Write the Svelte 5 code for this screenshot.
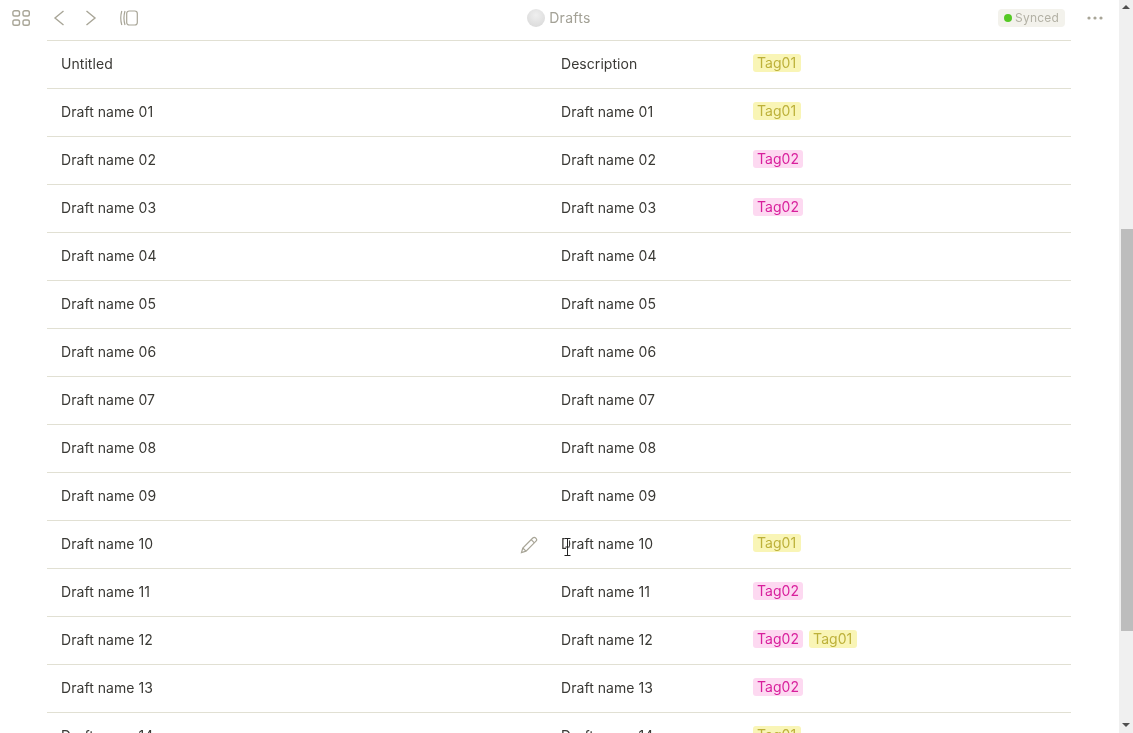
<script>
	const yellow = 'Tag01';
	const pink = 'Tag02';

	const rows = [
		{ name: 'Untitled', description: 'Description', tags: [yellow] },
		{ name: 'Draft name 01', tags: [yellow] },
		{ name: 'Draft name 02', tags: [pink] },
		{ name: 'Draft name 03', tags: [pink] },
		{ name: 'Draft name 04', tags: [] },
		{ name: 'Draft name 05', tags: [] },
		{ name: 'Draft name 06', tags: [] },
		{ name: 'Draft name 07', tags: [] },
		{ name: 'Draft name 08', tags: [] },
		{ name: 'Draft name 09', tags: [] },
		{ name: 'Draft name 10', tags: [yellow], hover: true },
		{ name: 'Draft name 11', tags: [pink] },
		{ name: 'Draft name 12', tags: [pink, yellow] },
		{ name: 'Draft name 13', tags: [pink] },
		{ name: 'Draft name 14', tags: [yellow] }
	];
</script>

<div class="app">
	<div class="main">
		<header class="toolbar">
			<div class="tools">
				<svg class="grid-icon" width="20" height="16" viewBox="0 0 20 16">
					<rect x="1.9" y="0.7" width="6.6" height="5.3" rx="1.8" />
					<rect x="12" y="0.7" width="6.3" height="5.3" rx="1.8" />
					<rect x="1.9" y="10" width="6.6" height="5.3" rx="1.8" />
					<rect x="12" y="10" width="6.3" height="5.3" rx="1.8" />
				</svg>
				<svg class="nav-icon" width="12" height="16" viewBox="0 0 12 16">
					<path d="M10.5 1 L2 8 L10.5 15" />
				</svg>
				<svg class="nav-icon next" width="12" height="16" viewBox="0 0 12 16">
					<path d="M1.5 1 L10 8 L1.5 15" />
				</svg>
				<svg class="panel-icon" width="18" height="16" viewBox="0 0 18 16">
					<path d="M1.8 1 C0.6 5 0.6 11 1.8 15" />
					<path d="M5 1 C3.8 5 3.8 11 5 15" />
					<rect x="6.7" y="1" width="10.6" height="14" rx="2.5" />
				</svg>
			</div>
			<div class="title">
				<span class="avatar"></span>
				<span>Drafts</span>
			</div>
			<div class="status">
				<span class="synced"><i class="dot"></i>Synced</span>
				<svg class="more" width="16" height="4" viewBox="0 0 16 4">
					<circle cx="2" cy="2" r="1.6" />
					<circle cx="8" cy="2" r="1.6" />
					<circle cx="14" cy="2" r="1.6" />
				</svg>
			</div>
		</header>

		<div class="list">
			{#each rows as row}
				<div class="row">
					<div class="name">
						<span>{row.name}</span>
						{#if row.hover}
							<svg class="edit" width="18" height="18" viewBox="0 0 18 18">
								<path d="M1.5 16.5 L2.8 12 L12.8 2 C13.6 1.2 14.8 1.2 15.6 2 L16 2.4 C16.8 3.2 16.8 4.4 16 5.2 L6 15.2 Z" />
								<path d="M11.2 3.6 L14.4 6.8" />
								<path d="M2.8 12 L6 15.2" />
							</svg>
						{/if}
					</div>
					<div class="description">
						{row.description ?? row.name}
						{#if row.hover}
							<svg class="cursor" width="7" height="18" viewBox="0 0 7 18">
								<path class="halo" d="M0.5 0.5 H6.5 M3.5 0.5 V17.5 M0.5 17.5 H6.5" />
								<path d="M0.5 0.5 H6.5 M3.5 0.5 V17.5 M0.5 17.5 H6.5 M1.5 9 H5.5" />
							</svg>
						{/if}
					</div>
					<div class="tags">
						{#each row.tags as tag}
							<span class="tag" class:pink={tag === pink}>{tag}</span>
						{/each}
					</div>
				</div>
			{/each}
		</div>
	</div>

	<div class="scrollbar">
		<span class="arrow up"></span>
		<div class="track"><div class="thumb"></div></div>
		<span class="arrow down"></span>
	</div>
</div>

<style>
	:global(body) {
		background: #fff;
		overflow: hidden;
	}

	.app {
		display: flex;
		height: 733px;
		overflow: hidden;
		will-change: transform;
		font-family: Inter, "Liberation Sans", sans-serif;
		font-size: 14px;
		letter-spacing: 0.05px;
		color: #3a3935;
	}

	.main {
		flex: 1;
		min-width: 0;
		display: flex;
		flex-direction: column;
	}

	.toolbar {
		flex: none;
		height: 36px;
		display: grid;
		grid-template-columns: 1fr auto 1fr;
		align-items: center;
		padding: 0 16px 0 11px;
	}

	.tools {
		display: flex;
		align-items: center;
	}

	.tools svg {
		fill: none;
		stroke: #a8a597;
		stroke-width: 1.4;
	}

	.nav-icon {
		margin-left: 22px;
	}

	.next {
		margin-left: 20px;
	}

	.panel-icon {
		margin-left: 23px;
	}

	.panel-icon path,
	.panel-icon rect {
		stroke-width: 1.2;
	}

	.title {
		display: flex;
		align-items: center;
		gap: 4px;
		margin-left: 4px;
		letter-spacing: 0.3px;
		color: #a3a196;
	}

	.title span:last-child {
		line-height: 16px;
		margin-top: -1px;
	}

	.avatar {
		width: 18px;
		height: 18px;
		border-radius: 50%;
		background: radial-gradient(circle at 50% 35%, #efefef, #d6d6d6);
	}

	.status {
		display: flex;
		justify-content: flex-end;
		align-items: center;
		gap: 22px;
	}

	.synced {
		display: flex;
		align-items: center;
		gap: 3px;
		height: 18px;
		padding: 0 6px;
		line-height: 16px;
		border-radius: 4px;
		background: #f3f2ec;
		color: #b3b1a5;
		font-size: 12px;
		letter-spacing: 0.2px;
	}

	.dot {
		width: 8px;
		height: 8px;
		border-radius: 50%;
		background: #55c925;
	}

	.more {
		fill: #a8a597;
	}

	.list {
		flex: 1;
		min-height: 0;
		overflow: hidden;
		margin-top: 4px;
		margin-left: 47px;
		width: 1024px;
		border-top: 1px solid #e1e0d3;
	}

	.row {
		display: flex;
		align-items: center;
		box-sizing: border-box;
		height: 48px;
		padding-bottom: 2px;
		border-bottom: 1px solid #e1e0d3;
	}

	.name {
		width: 514px;
		flex: none;
		box-sizing: border-box;
		padding-left: 14px;
		display: flex;
		align-items: center;
		justify-content: space-between;
		padding-right: 23px;
	}

	.edit {
		fill: none;
		stroke: #a8a597;
		stroke-width: 1.2;
		margin-top: 2px;
	}

	.description {
		width: 192px;
		flex: none;
		position: relative;
	}

	.cursor {
		position: absolute;
		left: 3px;
		top: 3px;
		fill: none;
		stroke: #222;
		stroke-width: 1;
	}

	.cursor .halo {
		stroke: #fff;
		stroke-width: 3;
	}

	.tags {
		display: flex;
		gap: 6px;
		margin-top: -2px;
	}

	.tag {
		padding: 0 5px 0 4px;
		height: 18px;
		line-height: 17px;
		border-radius: 3px;
		background: #f9f5b6;
		color: #bdb13a;
	}

	.tag.pink {
		padding: 0 4px;
		background: #fdd9f1;
		color: #d81f9c;
	}

	.scrollbar {
		flex: none;
		width: 14px;
		background: #f0f0f0;
		display: flex;
		flex-direction: column;
		align-items: center;
	}

	.arrow {
		flex: none;
		width: 0;
		height: 0;
		border-left: 4px solid transparent;
		border-right: 4px solid transparent;
	}

	.up {
		margin-top: 5px;
		border-bottom: 4px solid #505050;
	}

	.down {
		margin-bottom: 6px;
		border-top: 4px solid #505050;
	}

	.track {
		flex: 1;
		width: 100%;
		padding-top: 220px;
	}

	.thumb {
		height: 402px;
		margin-left: 2px;
		background: #bdbdbd;
	}
</style>
